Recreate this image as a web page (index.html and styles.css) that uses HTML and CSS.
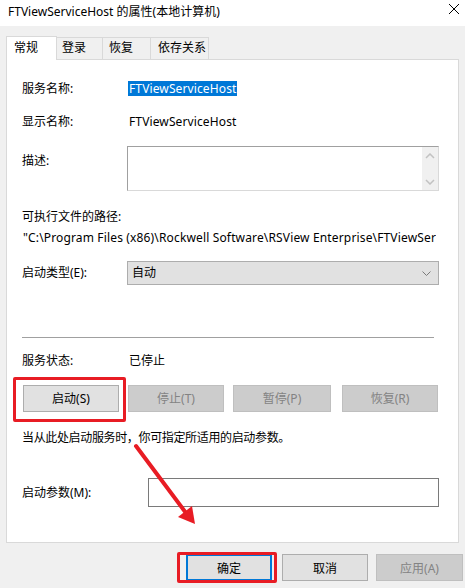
FILE: index.html
```html
<!DOCTYPE html>
<html>
<head>
<meta charset="utf-8">
<link rel="stylesheet" href="styles.css">
</head>
<body>
<div class="window">
  <div class="titlebar">
    <span class="title">FTViewServiceHost 的属性(本地计算机)</span>
    <svg class="close" width="12" height="12" viewBox="0 0 12 12"><path d="M1 1 L11 11 M11 1 L1 11" stroke="#000" stroke-width="1" fill="none"/></svg>
  </div>
  <div class="tabs">
    <div class="tab active t1">常规</div>
    <div class="tab t2">登录</div>
    <div class="tab t3">恢复</div>
    <div class="tab t4">依存关系</div>
  </div>
  <div class="panel">
    <div class="row r-name"><span class="label">服务名称:</span><span class="sel">FTViewServiceHost</span></div>
    <div class="row r-disp"><span class="label">显示名称:</span><span class="value latin">FTViewServiceHost</span></div>
    <div class="row r-desc">
      <span class="label label-desc">描述:</span>
      <div class="textbox">
        <div class="scroll">
          <svg width="10" height="6" viewBox="0 0 10 6"><path d="M1 5 L5 1 L9 5" stroke="#c2c2c2" stroke-width="1.5" fill="none"/></svg>
          <svg width="10" height="6" viewBox="0 0 10 6"><path d="M1 1 L5 5 L9 1" stroke="#c2c2c2" stroke-width="1.5" fill="none"/></svg>
        </div>
      </div>
    </div>
    <div class="row r-pathlabel">可执行文件的路径:</div>
    <div class="row r-path">"C:\Program Files (x86)\Rockwell Software\RSView Enterprise\FTViewSer</div>
    <div class="row r-type">
      <span class="label label-type">启动类型(E):</span>
      <div class="combo"><span>自动</span>
        <svg width="9" height="5" viewBox="0 0 9 5"><path d="M0.5 0.5 L4.5 4.5 L8.5 0.5" stroke="#7a7a7a" stroke-width="1" fill="none"/></svg>
      </div>
    </div>
    <div class="sep"></div>
    <div class="row r-status"><span class="label">服务状态:</span><span class="value">已停止</span></div>
    <div class="row r-btns">
      <div class="btn b-start">启动(S)</div>
      <div class="btn disabled b-stop">停止(T)</div>
      <div class="btn disabled b-pause">暂停(P)</div>
      <div class="btn disabled b-resume">恢复(R)</div>
    </div>
    <div class="row r-hint">当从此处启动服务时，你可指定所适用的启动参数。</div>
    <div class="row r-params">
      <span class="label label-params">启动参数(M):</span>
      <div class="inputbox"></div>
    </div>
  </div>
  <div class="footer">
    <div class="btn default b-ok">确定</div>
    <div class="btn b-cancel">取消</div>
    <div class="btn disabled b-apply">应用(A)</div>
  </div>
  <div class="mark mark-start"></div>
  <div class="mark mark-ok"></div>
  <svg class="arrow" width="465" height="588" viewBox="0 0 465 588">
    <line x1="136" y1="446" x2="186" y2="513" stroke="#e81c24" stroke-width="4" stroke-linecap="round"/>
    <polygon points="195,524 178,517 192,506" fill="#e81c24"/>
  </svg>
</div>
</body>
</html>
```

FILE: styles.css
```css
* { box-sizing: border-box; }
html, body {
  margin: 0;
  padding: 0;
  background: #f0f0f0;
}
body {
  font-family: "Noto Sans", "Noto Sans CJK SC", sans-serif;
  font-size: 12px;
  color: #000;
}
.window {
  position: relative;
  width: 465px;
  height: 588px;
  overflow: hidden;
}
.titlebar {
  height: 26px;
  background: #fff;
  padding: 4px 0 0 8px;
  line-height: 16px;
  display: flex;
  justify-content: space-between;
}
.close {
  margin: -1px 5px 0 0;
}
.tabs {
  position: relative;
  z-index: 1;
  display: flex;
  align-items: flex-end;
  height: 24px;
  margin-top: 10px;
  padding-left: 6px;
}
.tab {
  height: 22px;
  margin-bottom: 1px;
  line-height: 20px;
  border: 1px solid #d9d9d9;
  border-bottom: none;
  background: #f0f0f0;
  margin-left: -1px;
}
.tab.active {
  height: 24px;
  margin-bottom: 0;
  background: #fff;
  margin-left: 0;
  line-height: 21px;
}
.t1 { width: 51px; padding-left: 7px; }
.t2 { width: 47px; padding-left: 5px; }
.t3 { width: 49px; padding-left: 6px; }
.t4 { width: 59px; padding-left: 7px; }

.panel {
  margin: -1px 0 0 6px;
  width: 453px;
  height: 484px;
  background: #fff;
  border: 1px solid #d9d9d9;
  padding-left: 15px;
}
.row {
  display: flex;
  line-height: 16px;
}
.label { width: 106px; flex: none; }
.sel {
  background: #0078d7;
  color: #fff;
  height: 15px;
  line-height: 15px;
  padding: 0 1px;
  letter-spacing: 0.12px;
}
.value { padding-left: 1px; }
.latin { letter-spacing: 0.12px; }
.r-name { margin-top: 21px; height: 16px; }
.r-disp { margin-top: 17px; height: 16px; }
.r-desc { margin-top: 16px; height: 45px; }
.label-desc { width: 105px; padding-top: 7px; }
.textbox {
  width: 312px;
  height: 45px;
  border: 1px solid #a0a0a0;
  border-right-color: #d9d9d9;
  border-bottom-color: #d9d9d9;
  display: flex;
  justify-content: flex-end;
}
.scroll {
  width: 16px;
  height: 100%;
  background: #f0f0f0;
  display: flex;
  flex-direction: column;
  justify-content: space-between;
  align-items: center;
  padding: 6px 0 5px;
}
.scroll svg { display: block; }
.r-pathlabel { margin-top: 18px; height: 16px; }
.r-path {
  margin-top: 5px;
  height: 16px;
  width: 414px;
  white-space: nowrap;
  overflow: hidden;
  padding-left: 1px;
  letter-spacing: 0.15px;
}
.r-type { margin-top: 15px; height: 24px; align-items: center; }
.label-type { width: 105px; }
.combo {
  width: 312px;
  height: 24px;
  background: #e1e1e1;
  border: 1px solid #adadad;
  display: flex;
  align-items: center;
  justify-content: space-between;
  padding: 0 7px 0 4px;
}
.sep {
  margin-top: 52px;
  width: 412px;
  height: 1px;
  background: #a0a0a0;
}
.r-status { margin-top: 15px; height: 16px; }
.r-btns { margin-top: 16px; height: 27px; padding-left: 1px; }
.btn {
  height: 27px;
  border: 1px solid #adadad;
  background: #e1e1e1;
  display: flex;
  align-items: center;
  justify-content: center;
  flex: none;
}
.btn.disabled {
  background: #cccccc;
  border-color: #bfbfbf;
  color: #838383;
}
.b-start { width: 96px; }
.b-stop { width: 96px; margin-left: 9px; }
.b-pause { width: 98px; margin-left: 9px; }
.b-resume { width: 96px; margin-left: 11px; }
.r-hint { margin-top: 18px; height: 16px; letter-spacing: -0.35px; }
.r-params { margin-top: 32px; height: 29px; align-items: center; }
.label-params { width: 126px; }
.inputbox {
  width: 291px;
  height: 29px;
  border: 1px solid #7a7a7a;
}
.footer {
  display: flex;
  margin-top: 11px;
  padding-left: 186px;
}
.btn.default { border: 2px solid #0078d7; }
.b-ok { width: 86px; }
.b-cancel { width: 86px; margin-left: 10px; }
.b-apply { width: 87px; margin-left: 8px; }

.mark {
  position: absolute;
  border: 3px solid #e81c24;
  border-radius: 2px;
}
.mark-start { left: 13px; top: 377px; width: 113px; height: 45px; }
.mark-ok { left: 177px; top: 552px; width: 100px; height: 31px; }
.arrow {
  position: absolute;
  left: 0;
  top: 0;
  pointer-events: none;
}
```
